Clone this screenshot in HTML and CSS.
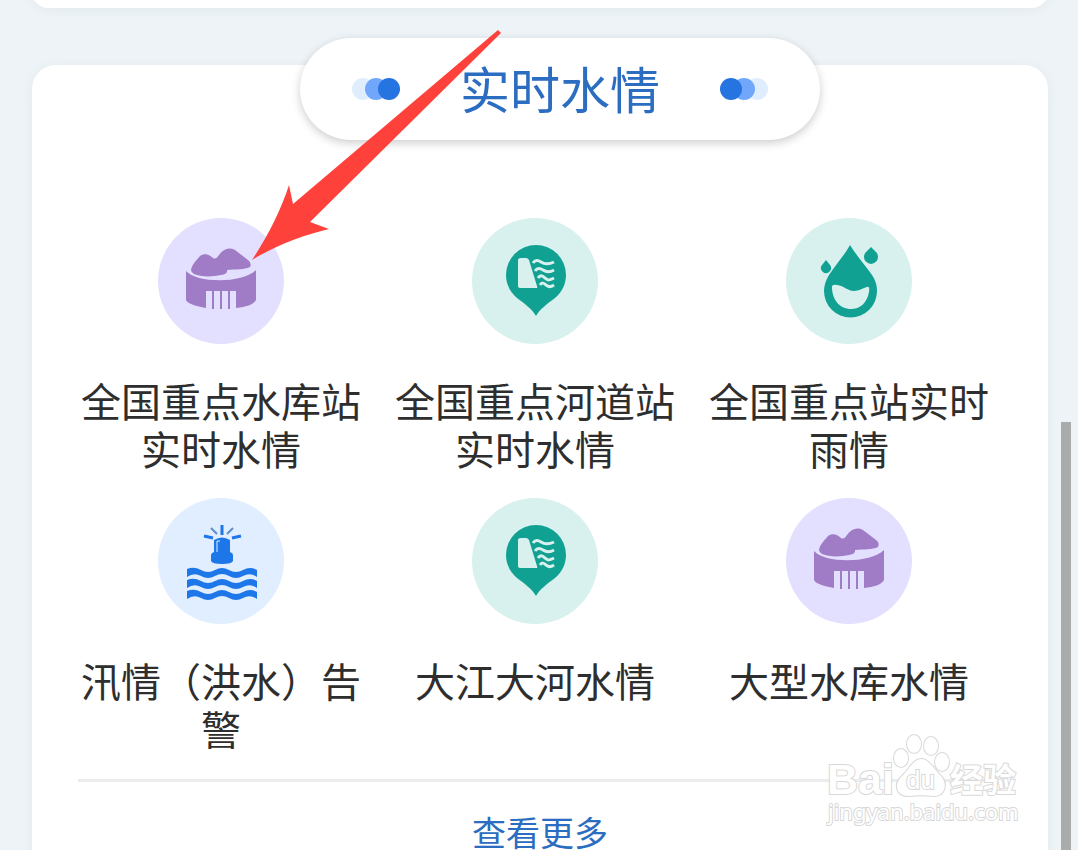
FILE: index.html
```html
<!DOCTYPE html>
<html lang="zh-CN">
<head>
  <meta charset="UTF-8" />
  <meta name="viewport" content="width=device-width, initial-scale=1.0"/>
  <title>实时水情</title>
  <link rel="stylesheet" href="styles.css">
</head>
<body>
  <!-- shared icons -->
  <svg class="sprite" aria-hidden="true">
    <symbol id="reservoir" viewBox="0 0 126 126">
      <path fill="#9f7cc5" d="M33 52C34 46 39 42 42 38C46 35 51 36 55 40Q58 42 61 37C65 31 71 29 77 32L90 42Q94 45 92 49C86 52 78 51 69 52Q70 56 63 57C54 59 43 59 36 56Q33 54 33 52Z"/>
      <path fill="#9f7cc5" d="M28 53C38 65 84 66 98 52V82C95 87 88 89 78 90V73H48V90C38 88 30 86 28 82Z"/>
      <path stroke="#9f7cc5" stroke-width="2" d="M55 73V91M63 73V91M71 73V91"/>
    </symbol>
    <symbol id="river" viewBox="0 0 126 126">
      <path fill="#11a193" d="M64 98C60 91 53 86 45 80C38 74 34 66 34 57A30 30 0 0 1 94 57C94 66 90 74 83 80C75 86 68 91 64 98Z"/>
      <path fill="#d9f1ee" d="M49 40H54Q56 40 57 42L65 68Q66 70 64 70H49Q46 70 46 68V42Q46 40 49 40Z"/>
      <path fill="none" stroke="#d9f1ee" stroke-width="3" d="M61 45C63 42 66 42 69 44S76 47 82 44M63 53C65 50 68 50 71 52S77 55 82 52M66 60C68 57 70 57 73 60S78 62 82 60M68 67C70 64 72 65 74 67S79 69 82 67"/>
    </symbol>
    <symbol id="rain" viewBox="0 0 126 126">
      <path fill="#11a193" d="M64 27C70 37 79 47 86 57C90 63 91 68 91 73A26.500 26.500 0 0 1 38 73C38 67 40 62 43 57C50 46 58 38 64 27Z"/>
      <path fill="#d9f1ee" d="M46 69Q46 66 51 67C58 68 62 73 68 73C73 73 77 70 81 69Q84 68 83 74C81 85 74 91 65 91C54 91 46 82 46 69Z"/>
      <path fill="#11a193" d="M40 42L44 47A5 5 0 1 1 36 47ZM85 29L90 34A7 7 0 1 1 80 34Z"/>
    </symbol>
    <symbol id="flood" viewBox="0 0 126 126">
      <g fill="#1e77e8">
        <path d="M56 54V42Q64 37 72 42V54Q75 55 75 57V63Q74 66 64 66Q54 66 53 63V57Q53 55 56 54Z"/>
        <path d="M29 71Q36 68 43 72T57 72T71 72T85 72T99 72V79Q92 74 85 78T71 78T57 78T43 78T29 79Z"/>
        <path d="M29 82Q36 79 43 83T57 83T71 83T85 83T99 83V90Q92 85 85 89T71 89T57 89T43 89T29 90Z"/>
        <path d="M29 93Q36 90 43 94T57 94T71 94T85 94T99 94V101Q92 96 85 100T71 100T57 100T43 100T29 101Z"/>
      </g>
      <path stroke="#1e77e8" stroke-width="3" d="M64 27V37M46 38L55 40M83 38L74 40"/>
      <path stroke="#5b8fd0" stroke-width="2" d="M53 30L59 36M75 30L69 36"/>
      <path fill="none" stroke="#e1eeff" d="M62 43H59V54"/>
    </symbol>
  </svg>

  <section class="card card-prev"></section>

  <section class="card">
    <header class="title-pill">
      <span class="dots"><i></i><i></i><i></i></span>
      <h2>实时水情</h2>
      <span class="dots dots-right"><i></i><i></i><i></i></span>
    </header>

    <nav class="menu">
      <a class="item" href="#">
        <svg class="icon purple"><use href="#reservoir"/></svg>
        <span>全国重点水库站实时水情</span>
      </a>
      <a class="item" href="#">
        <svg class="icon green"><use href="#river"/></svg>
        <span>全国重点河道站实时水情</span>
      </a>
      <a class="item" href="#">
        <svg class="icon green"><use href="#rain"/></svg>
        <span>全国重点站实时雨情</span>
      </a>
      <a class="item" href="#">
        <svg class="icon blue"><use href="#flood"/></svg>
        <span>汛情（洪水）告警</span>
      </a>
      <a class="item" href="#">
        <svg class="icon green"><use href="#river"/></svg>
        <span>大江大河水情</span>
      </a>
      <a class="item" href="#">
        <svg class="icon purple"><use href="#reservoir"/></svg>
        <span>大型水库水情</span>
      </a>
    </nav>

    <footer class="more">
      <a href="#">查看更多</a>
    </footer>

    <svg class="watermark" viewBox="0 0 200 100">
      <g class="outline">
        <text class="wm-brand" x="1" y="60">Bai</text>
        <ellipse cx="75" cy="24" rx="7" ry="9"/>
        <ellipse cx="88" cy="10" rx="7" ry="9"/>
        <ellipse cx="105" cy="12" rx="7" ry="9"/>
        <ellipse cx="116" cy="28" rx="7" ry="9"/>
        <path d="M95 25C103 25 107 34 114 41C122 48 120 62 108 62C100 61 90 61 84 62C70 63 67 50 76 42C84 35 86 26 95 25Z"/>
        <text class="wm-du" x="80" y="55">du</text>
        <text class="wm-cn" x="124" y="58">经验</text>
        <text class="wm-url" x="2" y="86">jingyan.baidu.com</text>
      </g>
    </svg>
  </section>

  <svg class="arrow" viewBox="0 0 250 230" aria-hidden="true">
    <path fill="#ff413c" d="M246 0L249 3L58 192L77 199C52 205 24 215 0 230C16 206 29 180 37 155L41 174Z"/>
  </svg>
  <div class="scrollbar"></div>
</body>
</html>
```

FILE: styles.css
```css
body {
  margin: 0;
  height: 100vh;
  overflow: hidden;
  background: #edf3f6;
  color: #2e2e2e;
  font-family: "Noto Sans CJK SC", sans-serif;
}
a {
  color: inherit;
  text-decoration: none;
}
.sprite {
  display: none;
}
.card {
  position: relative;
  margin: 0 30px 0 32px;
  padding-bottom: 24px;
  background: #fff;
  border-radius: 24px;
  box-shadow: 0 2px 12px rgba(60, 80, 90, 0.06);
}
.card-prev {
  height: 32px;
  padding: 0;
  margin-top: -24px;
  margin-bottom: 57px;
}

/* title */
.title-pill {
  position: relative;
  top: -27px;
  left: 20px;
  display: flex;
  align-items: center;
  justify-content: space-between;
  box-sizing: border-box;
  width: 520px;
  height: 102px;
  margin: 0 auto;
  padding: 0 52px;
  border-radius: 51px;
  background: #fff;
  box-shadow: 0 3px 10px rgba(0, 0, 0, 0.2);
}
.title-pill h2 {
  margin: 0;
  padding-bottom: 4px;
  color: #2b6dc0;
  font-size: 50px;
  font-weight: 400;
  line-height: 56px;
}
.dots {
  display: flex;
}
.dots i {
  width: 22px;
  height: 22px;
  margin-right: -9px;
  border-radius: 50%;
  background: #e0edff;
}
.dots i:nth-child(2) {
  background: #70a7fb;
}
.dots i:nth-child(3) {
  margin-right: 0;
  background: #2574e2;
}
.dots-right {
  transform: rotate(180deg);
}

/* menu */
.menu {
  display: grid;
  grid-template-columns: repeat(3, 1fr);
  row-gap: 26px;
  margin: 51px 42px 0 32px;
}
.item {
  display: flex;
  flex-direction: column;
  align-items: center;
  padding: 0 16px;
  font-size: 40px;
  line-height: 48px;
  text-align: center;
}
.icon {
  width: 126px;
  height: 126px;
  margin-bottom: 32px;
  border-radius: 50%;
}
.purple {
  background: #e3dfff;
}
.green {
  background: #d9f1ee;
}
.blue {
  background: #e1eeff;
}

.more {
  margin: 27px 46px 0;
  padding-top: 30px;
  border-top: 3px solid #ebeced;
  color: #2b6dc0;
  font-size: 34px;
  line-height: 40px;
  text-align: center;
}

/* overlays */
.watermark {
  position: absolute;
  right: 22px;
  bottom: 42px;
  width: 200px;
  height: 100px;
}
.outline {
  fill: #fff;
  stroke: #d8d8d8;
  stroke-width: 2px;
  paint-order: stroke;
}
.wm-brand {
  font: bold 43px "Liberation Sans", sans-serif;
}
.wm-du {
  font: 26px "Liberation Sans", sans-serif;
}
.wm-cn {
  font: bold 33px "Noto Sans CJK SC", sans-serif;
}
.wm-url {
  font: 22px "Noto Sans", sans-serif;
}
.arrow {
  position: absolute;
  top: 30px;
  left: 252px;
  width: 250px;
  height: 230px;
}
.scrollbar {
  position: fixed;
  top: 422px;
  right: 7px;
  bottom: 0;
  width: 10px;
  background: #a9acab;
}
```
